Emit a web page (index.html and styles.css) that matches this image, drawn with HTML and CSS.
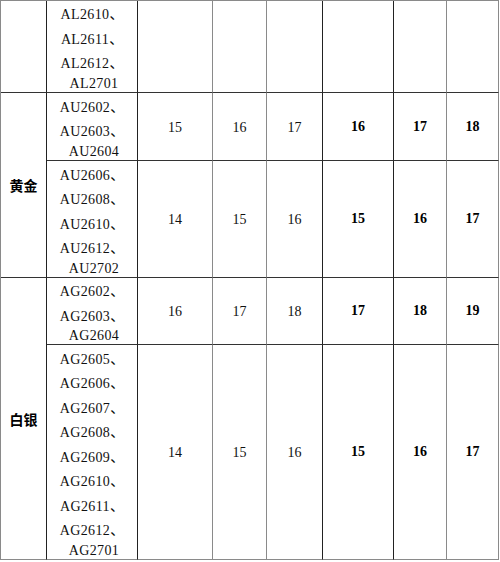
FILE: index.html
```html
<!DOCTYPE html>
<html lang="zh-CN">
<head>
<meta charset="utf-8">
<title>保证金表</title>
<link rel="stylesheet" href="styles.css">
</head>
<body>
<div class="sheet">
  <div class="cell c1"></div>
  <div class="cell c2 codes">
    <div class="ln">AL2610<span class="dun">、</span></div>
    <div class="ln">AL2611<span class="dun">、</span></div>
    <div class="ln">AL2612<span class="dun">、</span></div>
    <div class="ln end">AL2701</div>
  </div>
  <div class="cell c3"></div>
  <div class="cell c4"></div>
  <div class="cell c5"></div>
  <div class="cell c6"></div>
  <div class="cell c7"></div>
  <div class="cell c8"></div>

  <div class="cell c1 label span2">黄金</div>
  <div class="cell c2 codes">
    <div class="ln">AU2602<span class="dun">、</span></div>
    <div class="ln">AU2603<span class="dun">、</span></div>
    <div class="ln end">AU2604</div>
  </div>
  <div class="cell c3 num">15</div>
  <div class="cell c4 num">16</div>
  <div class="cell c5 num">17</div>
  <div class="cell c6 num strong">16</div>
  <div class="cell c7 num strong">17</div>
  <div class="cell c8 num strong">18</div>

  <div class="cell c2 codes">
    <div class="ln">AU2606<span class="dun">、</span></div>
    <div class="ln">AU2608<span class="dun">、</span></div>
    <div class="ln">AU2610<span class="dun">、</span></div>
    <div class="ln">AU2612<span class="dun">、</span></div>
    <div class="ln end">AU2702</div>
  </div>
  <div class="cell c3 num">14</div>
  <div class="cell c4 num">15</div>
  <div class="cell c5 num">16</div>
  <div class="cell c6 num strong">15</div>
  <div class="cell c7 num strong">16</div>
  <div class="cell c8 num strong">17</div>

  <div class="cell c1 label span2 last">白银</div>
  <div class="cell c2 codes">
    <div class="ln">AG2602<span class="dun">、</span></div>
    <div class="ln">AG2603<span class="dun">、</span></div>
    <div class="ln end">AG2604</div>
  </div>
  <div class="cell c3 num">16</div>
  <div class="cell c4 num">17</div>
  <div class="cell c5 num">18</div>
  <div class="cell c6 num strong">17</div>
  <div class="cell c7 num strong">18</div>
  <div class="cell c8 num strong">19</div>

  <div class="cell c2 codes last">
    <div class="ln">AG2605<span class="dun">、</span></div>
    <div class="ln">AG2606<span class="dun">、</span></div>
    <div class="ln">AG2607<span class="dun">、</span></div>
    <div class="ln">AG2608<span class="dun">、</span></div>
    <div class="ln">AG2609<span class="dun">、</span></div>
    <div class="ln">AG2610<span class="dun">、</span></div>
    <div class="ln">AG2611<span class="dun">、</span></div>
    <div class="ln">AG2612<span class="dun">、</span></div>
    <div class="ln end">AG2701</div>
  </div>
  <div class="cell c3 num last">14</div>
  <div class="cell c4 num last">15</div>
  <div class="cell c5 num last">16</div>
  <div class="cell c6 num strong last">15</div>
  <div class="cell c7 num strong last">16</div>
  <div class="cell c8 num strong last">17</div>
</div>
</body>
</html>
```

FILE: styles.css
```css
html, body {
  margin: 0;
  padding: 0;
  background: #ffffff;
}

.sheet {
  display: grid;
  grid-template-columns: 46px 91px 75px 54px 56px 71px 53px 52px;
  grid-template-rows: 92px 68px 117px 67px 215px;
  width: 498px;
  border-left: 1px solid #8a8a8a;
  border-top: 1px solid #8a8a8a;
  font-family: "Liberation Serif", "Noto Sans CJK SC", serif;
  font-size: 14px;
  color: #111;
}

.cell {
  box-sizing: border-box;
  border-right: 1px solid #222;
  border-bottom: 1px solid #333;
  display: flex;
  align-items: center;
  justify-content: center;
  text-align: center;
  overflow: visible;
}

.cell.c3,
.cell.c4,
.cell.c7,
.cell.c8 {
  border-right-color: #8a8a8a;
}

.cell.last {
  border-bottom-color: #8a8a8a;
}

.span2 {
  grid-row: span 2;
}

.label {
  font-family: "Noto Sans CJK SC", sans-serif;
  font-weight: 700;
  font-size: 14px;
  color: #000;
}

.codes {
  flex-direction: column;
  justify-content: center;
  align-items: center;
}

.ln {
  box-sizing: border-box;
  height: 24.5px;
  padding-top: 5px;
  line-height: 19.5px;
  white-space: nowrap;
  letter-spacing: 0.35px;
}

.ln.end {
  height: 19px;
  padding-top: 0;
  line-height: 19px;
  padding-left: 4px;
}

.dun {
  font-family: "Noto Sans CJK SC", sans-serif;
  line-height: 0;
  letter-spacing: 0;
}

.num {
  padding-top: 2px;
}

.strong {
  font-weight: 700;
  color: #000;
  padding-top: 0;
}
```
